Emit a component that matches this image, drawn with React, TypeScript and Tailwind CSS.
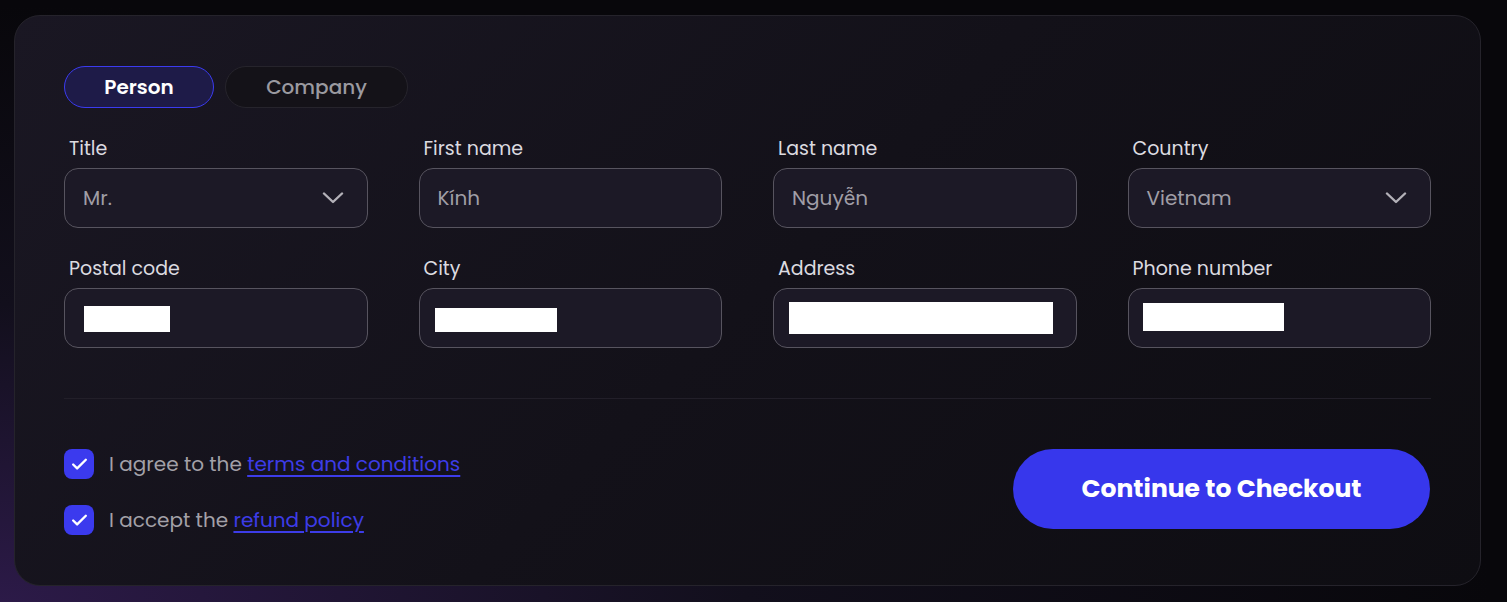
import { Check } from "lucide-react";

const fields = [
  { label: "Title", value: "Mr.", select: true },
  { label: "First name", value: "Kính" },
  { label: "Last name", value: "Nguyễn" },
  { label: "Country", value: "Vietnam", select: true },
  { label: "Postal code", mask: "ml-[1px] w-[86px] h-[26px] mt-[2px]" },
  { label: "City", mask: "-ml-[3px] w-[122px] h-[24px] mt-[4px]" },
  { label: "Address", mask: "-ml-[3px] w-[273px] h-[32px]" },
  { label: "Phone number", mask: "-ml-[4px] w-[141px] h-[28px] -mt-[2px]" },
];

// chevron in the selects, wider than lucide's
const Chevron = () => (
  <svg width="22" height="12" viewBox="0 0 22 12" fill="none">
    <path
      d="M2 1.5 L11 10 L20 1.5"
      stroke="#b3b1b8"
      strokeWidth="2.4"
      strokeLinecap="round"
      strokeLinejoin="round"
    />
  </svg>
);

const Field = ({
  label,
  value,
  select,
  mask,
}: {
  label: string;
  value?: string;
  select?: boolean;
  mask?: string;
}) => (
  <div className="flex flex-col">
    <label className="pl-[5px] pt-[1px] text-[19px] leading-[24px] text-[#dcdbe0]">
      {label}
    </label>
    <div className="mt-[7px] flex h-[60px] items-center justify-between rounded-[14px] border border-[#57545f] bg-[#1c1926] pl-[18px] pr-[23px]">
      {mask ? (
        <div className={`bg-white ${mask}`} />
      ) : (
        <span className="text-[20px] text-[#a09ea6]">{value}</span>
      )}
      {select && <Chevron />}
    </div>
  </div>
);

const CheckRow = ({ text, link }: { text: string; link: string }) => (
  <div className="flex items-center gap-[15px]">
    <div className="flex h-[30px] w-[30px] items-center justify-center rounded-[8px] bg-[#3b3aee]">
      <Check className="h-[19px] w-[19px] text-white" strokeWidth={3} />
    </div>
    <p className="text-[20px] text-[#a3a1a8]">
      {text}{" "}
      <a href="#" className="text-[#3d3ce8] underline underline-offset-[4px]">
        {link}
      </a>
    </p>
  </div>
);

export default function App() {
  return (
    <div className="min-h-[602px] w-full bg-[radial-gradient(ellipse_at_0%_100%,#2c1a48_0%,#120f1c_35%,#08070b_70%)] pl-[14px] pr-[26px] pt-[15px] pb-[16px] font-['Poppins','Inter',sans-serif]">
      <div className="rounded-[26px] border border-[#25232b] bg-[linear-gradient(135deg,#1a1723_0%,#131119_50%,#0e0d12_100%)] px-[49px] pt-[50px] pb-[50px]">
        <div className="flex gap-[11px]">
          <button className="h-[42px] w-[150px] rounded-full border border-[#3b3bf0] bg-[#1e1b48] text-[20px] font-semibold text-white">
            Person
          </button>
          <button className="h-[42px] w-[183px] rounded-full border border-[#26242c] bg-[#141218] text-[20px] font-medium text-[#9b9aa0]">
            Company
          </button>
        </div>

        <div className="mt-[28px] grid grid-cols-4 gap-x-[51px] gap-y-[28px]">
          {fields.map((f) => (
            <Field key={f.label} {...f} />
          ))}
        </div>

        <div className="mt-[50px] h-px bg-[#221f29]" />

        <div className="mt-[50px] flex items-center justify-between pr-[1px]">
          <div className="flex flex-col gap-[26px]">
            <CheckRow text="I agree to the" link="terms and conditions" />
            <CheckRow text="I accept the" link="refund policy" />
          </div>
          <button className="mt-[-6px] h-[80px] w-[417px] rounded-full bg-[#3737ec] text-[25px] font-bold text-white">
            Continue to Checkout
          </button>
        </div>
      </div>
    </div>
  );
}
